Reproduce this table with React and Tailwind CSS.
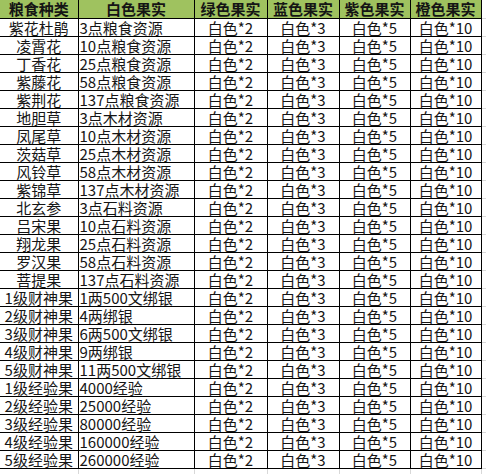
const ROWS = [
  ['紫花杜鹃', '3点粮食资源'],
  ['凌霄花', '10点粮食资源'],
  ['丁香花', '25点粮食资源'],
  ['紫藤花', '58点粮食资源'],
  ['紫荆花', '137点粮食资源'],
  ['地胆草', '3点木材资源'],
  ['凤尾草', '10点木材资源'],
  ['茨菇草', '25点木材资源'],
  ['风铃草', '58点木材资源'],
  ['紫锦草', '137点木材资源'],
  ['北玄参', '3点石料资源'],
  ['吕宋果', '10点石料资源'],
  ['翔龙果', '25点石料资源'],
  ['罗汉果', '58点石料资源'],
  ['菩提果', '137点石料资源'],
  ['1级财神果', '1两500文绑银'],
  ['2级财神果', '4两绑银'],
  ['3级财神果', '6两500文绑银'],
  ['4级财神果', '9两绑银'],
  ['5级财神果', '11两500文绑银'],
  ['1级经验果', '4000经验'],
  ['2级经验果', '25000经验'],
  ['3级经验果', '80000经验'],
  ['4级经验果', '160000经验'],
  ['5级经验果', '260000经验'],
];

const HEADERS = ['粮食种类', '白色果实', '绿色果实', '蓝色果实', '紫色果实', '橙色果实'];
const FRUITS = ['白色*2', '白色*3', '白色*5', '白色*10'];

const cell = 'border-r border-b border-black h-[18px] p-0 leading-[17px] whitespace-nowrap align-middle';

function Txt({ children }) {
  return <span className="inline-block align-top leading-[17px] h-[17px]">{children}</span>;
}

export default function App() {
  return (
    <div className="w-[486px] h-[474px] bg-white overflow-hidden">
      <table
        className="table-fixed border-collapse text-[15px] text-[#151515]"
        style={{ fontFamily: '"Noto Sans CJK SC", "Noto Sans", sans-serif' }}
      >
        <colgroup>
          <col className="w-[78px]" />
          <col className="w-[116px]" />
          <col className="w-[73px]" />
          <col className="w-[72px]" />
          <col className="w-[71px]" />
          <col className="w-[71px]" />
          <col className="w-[5px]" />
        </colgroup>
        <thead>
          <tr>
            {HEADERS.map((h) => (
              <th key={h} className={`${cell} bg-[#9fc25f] font-bold text-center`}>
                <Txt>{h}</Txt>
              </th>
            ))}
            <th className="border-b border-[#d8d8d8] p-0" />
          </tr>
        </thead>
        <tbody>
          {ROWS.map(([name, base]) => (
            <tr key={name}>
              <td className={`${cell} text-center`}><Txt>{name}</Txt></td>
              <td className={`${cell} text-left pl-px`}><Txt>{base}</Txt></td>
              {FRUITS.map((f) => (
                <td key={f} className={`${cell} text-center`}><Txt>{f}</Txt></td>
              ))}
              <td className="border-b border-[#d8d8d8] p-0" />
            </tr>
          ))}
          <tr>
            {[0, 1, 2, 3, 4, 5].map((i) => (
              <td key={i} className="border-r border-[#d8d8d8] h-[18px] p-0" />
            ))}
            <td className="p-0" />
          </tr>
        </tbody>
      </table>
    </div>
  );
}
